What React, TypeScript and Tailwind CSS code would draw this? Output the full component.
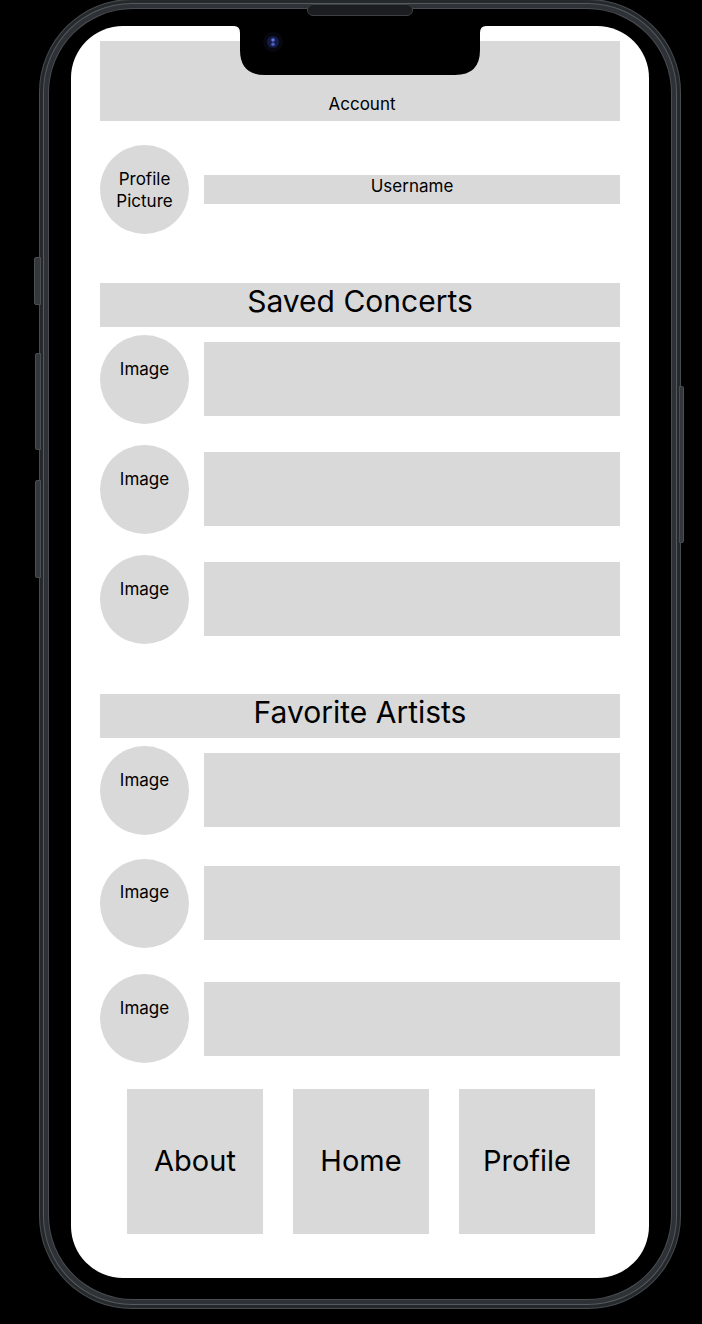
import React from 'react';

const rowGray = 'bg-[#d9d9d9]';

const ListRow = ({ top, rectOffset, textTop }: { top: number; rectOffset: number; textTop: number }) => (
  <div className="flex gap-[15px]" style={{ marginTop: top }}>
    <div className={`w-[89px] h-[89px] shrink-0 rounded-full ${rowGray} flex justify-center`}>
      <span className="text-[17px] leading-[20px]" style={{ marginTop: textTop }}>Image</span>
    </div>
    <div className={`flex-1 h-[74px] ${rowGray}`} style={{ marginTop: rectOffset }} />
  </div>
);

const SectionBar = ({ title, top }: { title: string; top: number }) => (
  <div className={`h-[44px] ${rowGray} flex justify-center`} style={{ marginTop: top }}>
    <span className="text-[30px] leading-[36px]">{title}</span>
  </div>
);

const NavButton = ({ label }: { label: string }) => (
  <div className={`w-[136px] h-[145px] ${rowGray} flex items-center justify-center`}>
    <span className="text-[29px] leading-[36px] mt-[-2px]">{label}</span>
  </div>
);

export default function App() {
  return (
    <div className="relative w-[702px] h-[1324px] bg-black overflow-hidden pl-[40px]" style={{ fontFamily: 'Inter, "Noto Sans", sans-serif' }}>
      {/* side buttons */}
      <div className="absolute left-[34px] top-[257px] w-[7px] h-[48px] rounded-l-[2px] bg-[#34383c] border border-[#4a4f54]" />
      <div className="absolute left-[35px] top-[353px] w-[6px] h-[97px] rounded-l-[2px] bg-[#34383c] border border-[#4a4f54]" />
      <div className="absolute left-[35px] top-[480px] w-[6px] h-[98px] rounded-l-[2px] bg-[#34383c] border border-[#4a4f54]" />
      <div className="absolute left-[679px] top-[386px] w-[5px] h-[157px] rounded-r-[2px] bg-[#34383c] border border-[#4a4f54]" />

      {/* phone frame: metal rim, then black bezel */}
      <div className="w-[640px] h-[1308px] rounded-[92px] bg-[#2e3236] p-[9px] shadow-[0_0_0_1px_#464b50,inset_0_0_0_3px_#25292c,inset_0_0_0_4px_#545a5f]">
        <div className="w-full h-full rounded-[84px] bg-black pt-[17px] pb-[21px] px-[22px] shadow-[0_0_0_1px_#4a4e52]">
          <div className="relative w-[578px] h-[1252px] bg-white rounded-[52px] overflow-hidden px-[29px] flex flex-col text-black">
            {/* notch */}
            <svg className="absolute left-[163px] top-0" width="252" height="50" viewBox="0 0 252 50">
              <path d="M0 0 H252 Q246 0 246 7 V24 Q246 49 221 49 H31 Q6 49 6 24 V7 Q6 0 0 0 Z" fill="#000" />
              <circle cx="39" cy="16" r="10" fill="#07080f" />
              <circle cx="39" cy="16" r="6" fill="#151c48" />
              <circle cx="39" cy="14" r="1.8" fill="#5d72d6" />
              <circle cx="39" cy="18.3" r="1.8" fill="#4b5ec0" />
            </svg>

            {/* account header */}
            <div className={`mt-[15px] h-[80px] ${rowGray} flex items-end justify-center pb-[7px] shrink-0`}>
              <span className="text-[17px] leading-[20px] ml-[4px]">Account</span>
            </div>

            {/* profile */}
            <div className="mt-[24px] flex gap-[15px] shrink-0">
              <div className={`w-[89px] h-[89px] shrink-0 rounded-full ${rowGray} flex items-center justify-center text-center`}>
                <span className="text-[17px] leading-[22px]">Profile<br />Picture</span>
              </div>
              <div className={`flex-1 mt-[30px] h-[29px] ${rowGray} flex justify-center pt-[1px]`}>
                <span className="text-[17px] leading-[20px]">Username</span>
              </div>
            </div>

            <SectionBar title="Saved Concerts" top={49} />
            <ListRow top={8} rectOffset={7} textTop={24} />
            <ListRow top={21} rectOffset={7} textTop={24} />
            <ListRow top={21} rectOffset={7} textTop={24} />

            <SectionBar title="Favorite Artists" top={50} />
            <ListRow top={8} rectOffset={7} textTop={24} />
            <ListRow top={24} rectOffset={7} textTop={23} />
            <ListRow top={26} rectOffset={8} textTop={24} />

            <div className="mt-[26px] pl-[27px] flex gap-[30px] shrink-0">
              <NavButton label="About" />
              <NavButton label="Home" />
              <NavButton label="Profile" />
            </div>
          </div>
        </div>
      </div>

      {/* speaker */}
      <div className="absolute left-[307px] top-[4px] w-[106px] h-[12px] rounded-full bg-[#1b1d20] border border-[#3d4246]" />
    </div>
  );
}
